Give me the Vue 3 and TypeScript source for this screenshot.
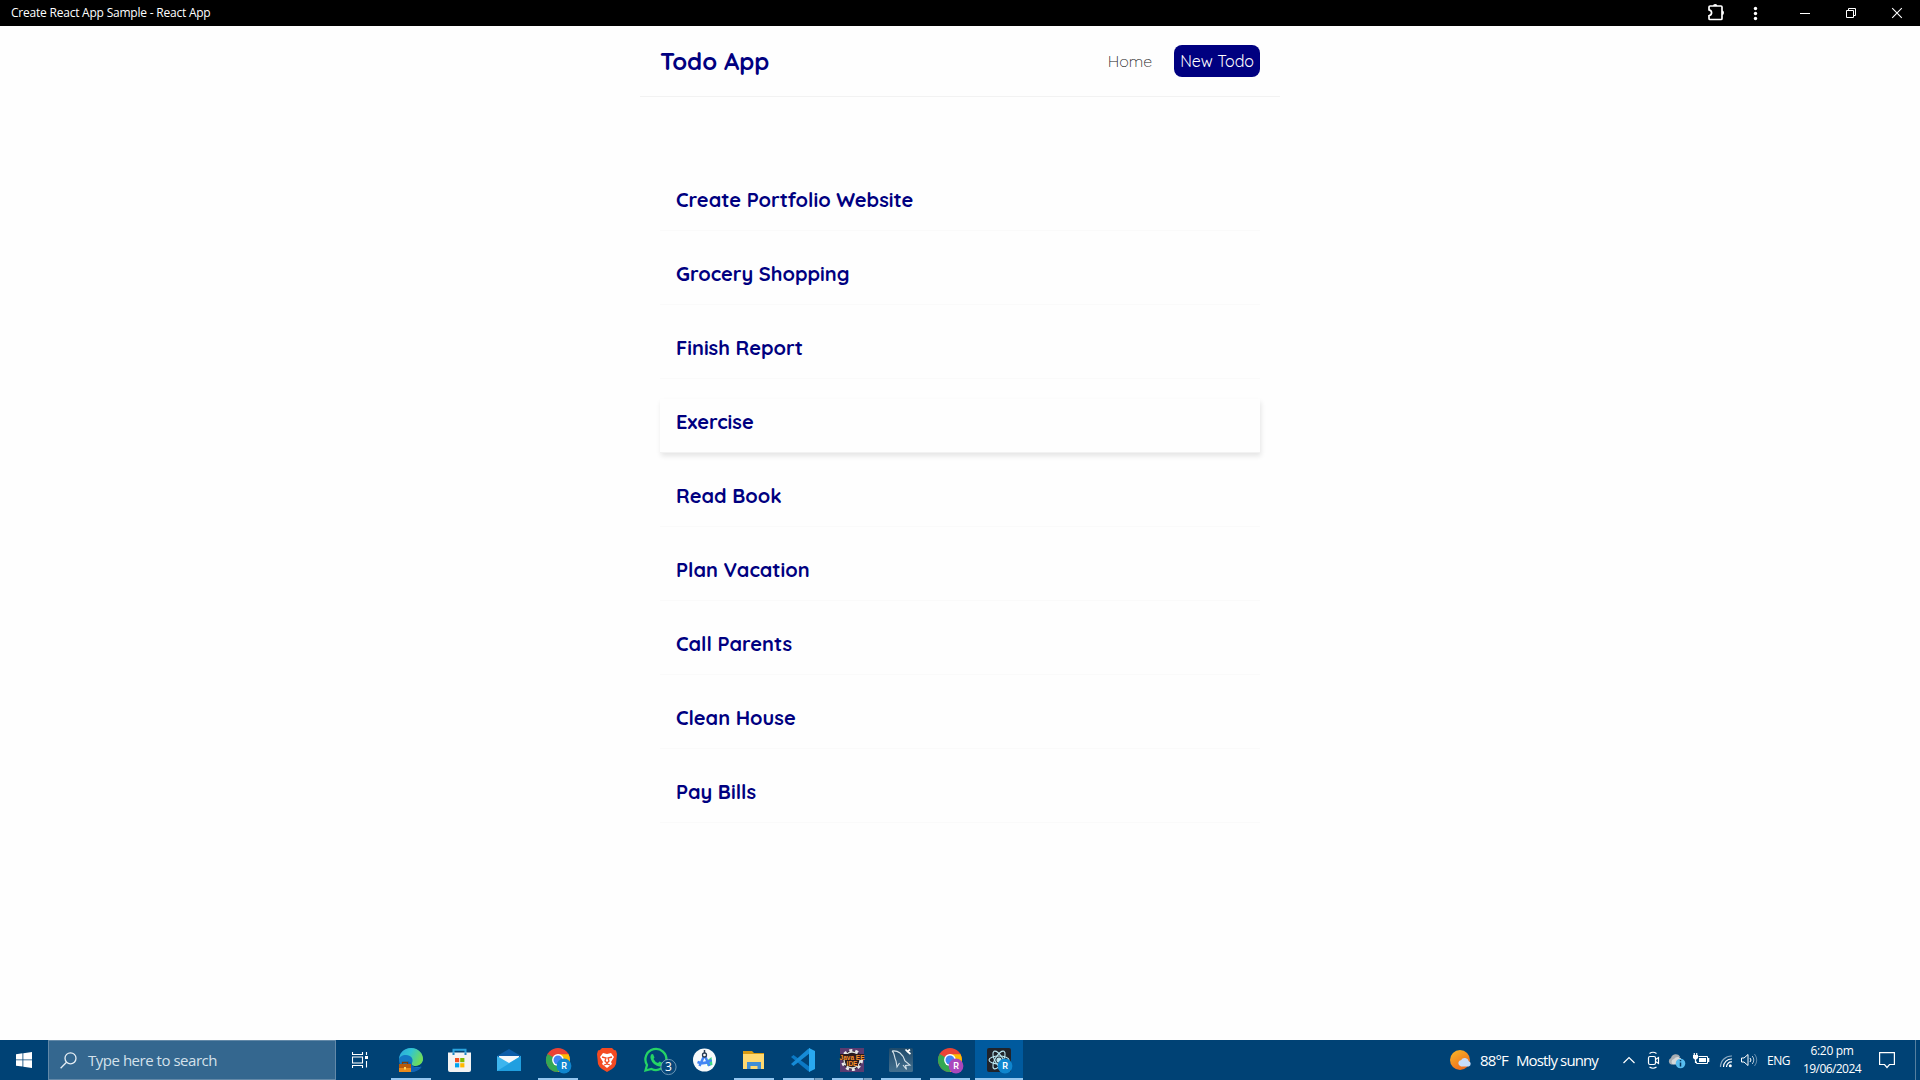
<script setup lang="ts">
import { ref } from 'vue'

const todos: string[] = [
  'Create Portfolio Website',
  'Grocery Shopping',
  'Finish Report',
  'Exercise',
  'Read Book',
  'Plan Vacation',
  'Call Parents',
  'Clean House',
  'Pay Bills',
]
const active = ref(3)

// Tracks a label out so that it fills the given width in pixels.
const vFit = {
  mounted(el: HTMLElement, binding: { value: number }) {
    const natural = el.getBoundingClientRect().width
    const count = (el.textContent ?? '').length
    el.style.letterSpacing = `${(binding.value - natural) / count}px`
  },
}

const apps = [
  { id: 'edge', open: true },
  { id: 'store' },
  { id: 'mail' },
  { id: 'chrome', open: true, badge: '#0f86cf' },
  { id: 'brave' },
  { id: 'whatsapp' },
  { id: 'studio' },
  { id: 'explorer', open: true },
  { id: 'code', open: true, stacked: true },
  { id: 'eclipse', open: true, stacked: true },
  { id: 'mysql', open: true },
  { id: 'chrome', open: true, badge: '#ab47bc' },
  { id: 'react', open: true, focused: true, badge: '#0f86cf' },
] as { id: string; open?: boolean; stacked?: boolean; focused?: boolean; badge?: string }[]
</script>

<template>
  <div class="screen">
    <div class="titlebar">
      <span v-fit="199.5" class="window-title">Create React App Sample - React App</span>
      <svg class="window-tools" width="220" height="26" viewBox="1700 0 220 26" fill="none">
        <path
          d="M1710.2 6H1721Q1722 6 1722 7V18.500Q1722 19.500 1721 19.500H1710Q1709 19.500 1709 18.500V15.700Q1711.600 15 1711.600 12.700T1709 9.800V7Q1709 6 1710.200 6Z"
          stroke="#fff" stroke-width="1.7"
        />
        <path d="M1713 6a2.200 2 0 0 1 4.400 0zM1722 10.600a2 2.200 0 0 1 0 4.400z" fill="#fff" />
        <circle cx="1755.500" cy="8.500" r="1.700" fill="#fff" />
        <circle cx="1755.500" cy="13.500" r="1.700" fill="#fff" />
        <circle cx="1755.500" cy="18.500" r="1.700" fill="#fff" />
        <path d="M1800 13.500h10M1846.500 10.500h7v7h-7zM1848.500 10v-1.500h7v7h-1.500" stroke="#fff" />
        <path d="M1892.200 8.200l9.600 9.600M1901.800 8.200l-9.600 9.600" stroke="#fff" stroke-width="1.100" />
      </svg>
    </div>

    <div class="page">
      <nav class="navbar">
        <h1>Todo App</h1>
        <div class="links">
          <a class="home">Home</a>
          <a class="new">New Todo</a>
        </div>
      </nav>
      <main class="todo-list">
        <article v-for="(todo, i) in todos" :key="todo" class="todo" :class="{ active: i === active }">
          <h2>{{ todo }}</h2>
        </article>
      </main>
    </div>

    <footer class="taskbar">
      <div class="start">
        <svg width="16" height="16" viewBox="0 0 16 16" fill="#fff">
          <path d="M0 2.200L6.500 1.300V7.500H0zM7.300 1.200L16 0V7.500H7.300zM0 8.300H6.500V14.600L0 13.700zM7.300 8.300H16V16L7.300 14.700z" />
        </svg>
      </div>
      <div class="search">
        <svg width="17" height="17" viewBox="0 0 17 17" fill="none" stroke="#e6eef4" stroke-width="1.300">
          <circle cx="10.500" cy="6.300" r="5.500" />
          <path d="M6.500 10.300L.6 16.200" />
        </svg>
        <span v-fit="129">Type here to search</span>
      </div>
      <div class="taskview">
        <svg width="17" height="16" viewBox="0 0 17 16" fill="none" stroke="#fff" stroke-width="1.100">
          <path d="M.5 0v2.500h10V0M.5 5h10v6h-10zM.5 16v-2.500h10V16M14.500 0v3M14.500 9v6.500" />
          <path d="M13 4h3v3h-3z" fill="#fff" stroke="none" />
        </svg>
      </div>

      <div class="apps">
        <div
          v-for="(app, i) in apps"
          :key="i"
          class="app"
          :class="{ open: app.open, stacked: app.stacked, focused: app.focused }"
        >
          <svg width="40" height="40" viewBox="-20 -20 40 40">
            <g v-if="app.id === 'edge'">
              <defs>
                <linearGradient id="edgeTop" x1="0" y1="0" x2="1" y2=".4">
                  <stop offset="0" stop-color="#2aa5dc" /><stop offset=".5" stop-color="#31c5d3" /><stop offset="1" stop-color="#6fdc5a" />
                </linearGradient>
              </defs>
              <circle r="12" fill="#1378c4" />
              <path d="M-12 0C-12-7-7-12 0-12C8-12 12-6 12-1C12 4 8 6 4.500 6C1 6-.5 4.500 1 3C3-1 0-5-5-5C-9-5-12-3-12 0Z" fill="url(#edgeTop)" />
              <path d="M1 3C-.5 4.500 1 6 4.500 6C7.500 6 10.500 4.500 12 1V5L9 7H3L0 5Z" fill="#004275" />
              <path d="M-3 1C-5 7-1 12 3 11.600C7 10.500 9.500 9 10.600 7C6 9 0 7 .5 3Z" fill="#1261b5" />
              <path d="M-8.500 4V2.500h5V4" fill="none" stroke="#7a3d08" stroke-width="1.300" />
              <path d="M-12 4H0v8h-12z" fill="#e98b1b" /><path d="M-12 4H0v4h-12z" fill="#b75b0c" /><path d="M-7 7h2v2.500h-2z" fill="#ffd35c" />
            </g>
            <g v-else-if="app.id === 'store'" transform="translate(-1 0)">
              <path d="M-5.500-6v-4.200h12V-6" fill="none" stroke="#2ba5df" stroke-width="2" />
              <path d="M-11-7.500H12V10Q12 12 10 12H-9Q-11 12-11 10Z" fill="#f3f3f3" />
              <path d="M-5.500-7.500v2.500M6.500-7.500v2.500" stroke="#1b83c4" stroke-width="2" />
              <path d="M-4-2h4.200v4.200H-4z" fill="#f25022" /><path d="M1.200-2h4.200v4.200H1.200z" fill="#7fba00" />
              <path d="M-4 3.200h4.200v4.200H-4z" fill="#00a4ef" /><path d="M1.200 3.200h4.200v4.200H1.200z" fill="#ffb900" />
            </g>
            <g v-else-if="app.id === 'mail'">
              <path d="M-12-4L0-11L12-4V3H-12z" fill="#0b5ca8" />
              <path d="M-10-4H10V5H-10z" fill="#f4f8fb" />
              <path d="M-12-4L0 3L12-4V11H-12z" fill="#3db5ee" /><path d="M-12 11L12-4V11z" fill="#209fe0" />
            </g>
            <g v-else-if="app.id === 'chrome'">
              <circle r="12" fill="#ea4335" />
              <path d="M0 0L-10.400-6A12 12 0 0 0 0 12L5 3z" fill="#34a853" />
              <path d="M0 0V-5.700H10.500A12 12 0 0 1 0 12L5 3z" fill="#fbbc04" />
              <circle r="5.900" fill="#fff" /><circle r="4.500" fill="#4285f4" />
            </g>
            <g v-else-if="app.id === 'brave'">
              <path d="M-5-12H5L7-10L9-9.500L10-6L9 4Q8 7 5 9L0 12L-5 9Q-8 7-9 4L-10-6L-9-9.500L-7-10Z" fill="#f44a22" />
              <path d="M-4-7L0-6L4-7L7-3L4 2L5 4L0 8L-5 4L-4 2L-7-3Z" fill="#fff" />
              <path d="M-5-3L-1-2L-2 1L0 3L2 1L1-2L5-3M-3 5L0 4L3 5" fill="none" stroke="#f44a22" stroke-width="1.300" />
            </g>
            <g v-else-if="app.id === 'whatsapp'">
              <path d="M-10.500 10.500L-9 5A10.500 10.500 0 1 1-4.500 9Z" fill="none" stroke="#25d366" stroke-width="2.300" />
              <path d="M-5-5.500L-3-6L-1.500-2.500L-2.500-1Q-1 2 2 3L3.500 1.500L7 3L6 5.500Q3 8-2 4Q-7-1-5-5.500Z" fill="#25d366" />
              <circle cx="12.500" cy="7" r="7.600" fill="#08477a" stroke="#87a9c3" stroke-width=".8" />
              <text x="12.500" y="11.300" class="count">3</text>
            </g>
            <g v-else-if="app.id === 'studio'" transform="translate(-.5 0)">
              <circle r="11.500" fill="#f7fafb" /><path d="M2 1L7-3L8 5L3 6z" fill="#3ddc84" />
              <path d="M0-5L-5 6M0-5L5 6M-7 2Q0 5 7 0" fill="none" stroke="#4285f4" stroke-width="2.500" />
              <circle cy="-5" r="2" fill="#f7fafb" stroke="#263b52" stroke-width="1.300" /><path d="M0-10v3" stroke="#263b52" stroke-width="1.500" />
            </g>
            <g v-else-if="app.id === 'explorer'">
              <path d="M-11-9H-2L0-7H10V-2H-11z" fill="#d89b13" /><path d="M-11-6H10V9H-11z" fill="#ffd970" />
              <path d="M-7 9V2H7V9H3.500V6H-3.500V9z" fill="#3f8ed6" />
            </g>
            <g v-else-if="app.id === 'code'">
              <path d="M-12-3L-9.500-5L7 7V12L5 11z" fill="#0b79c5" /><path d="M-12 4L-9.500 6L7-7V-12L5-11z" fill="#168bd6" />
              <path d="M6-12L12-9V9L6 12z" fill="#29a9f1" />
            </g>
            <g v-else-if="app.id === 'eclipse'">
              <path d="M-12-12H12V12H-12z" fill="#5a3b70" /><circle r="9.500" fill="#2c2226" stroke="#e8e8e8" stroke-width="3" stroke-dasharray="3 2.970" />
              <circle r="8" fill="#241b1d" stroke="#dcdcdc" stroke-width="1.300" />
              <path d="M-12-6H12V0H-12zM-6 0H6V6H-6z" fill="#2c1a1c" />
              <text x="0" y="-.5" class="java">Java EE</text><text x="0" y="5.500" class="java">IDE</text>
            </g>
            <g v-else-if="app.id === 'mysql'">
              <defs>
                <linearGradient id="dolphin" x1="0" y1="0" x2="0" y2="1"><stop stop-color="#1f4a6a" /><stop offset="1" stop-color="#44708f" /></linearGradient>
              </defs>
              <rect x="-12" y="-12" width="24" height="24" rx="1.500" fill="url(#dolphin)" />
              <path d="M-9-9C-3-10 2-6 4 1L9 5L4.500 5.500L5.500 9.500L2 5M-9-9C-6-7-7-2-5 1L-4 7L-1.500 3" fill="none" stroke="#d5e2e9" stroke-width="1.100" />
              <path d="M4.500-10.500L6.500-8.500L9-10.500M6.500-8.500L9.500-6" fill="none" stroke="#fff" stroke-width="1.700" />
            </g>
            <g v-else fill="none" stroke="#bceaf5" stroke-width="1.100">
              <rect x="-12" y="-12" width="24" height="24" rx="2" fill="#20232a" stroke="none" />
              <ellipse rx="10" ry="4" /><ellipse rx="10" ry="4" transform="rotate(60)" /><ellipse rx="10" ry="4" transform="rotate(120)" />
              <circle r="2" fill="#bceaf5" />
            </g>
            <g v-if="app.badge">
              <circle cx="6" cy="6" r="7.400" :fill="app.badge" /><text x="6" y="9.200" class="profile">R</text>
            </g>
          </svg>
        </div>
      </div>

      <div class="tray">
        <svg class="weather" width="24" height="24" viewBox="0 0 24 24">
          <defs>
            <linearGradient id="sun" x1="0" y1="0" x2=".6" y2="1"><stop stop-color="#f8ba28" /><stop offset="1" stop-color="#ee6b1c" /></linearGradient>
          </defs>
          <circle cx="10" cy="12" r="10" fill="url(#sun)" />
          <path d="M11 18.500a3.200 3.200 0 0 1 0-6.300a4.200 4.200 0 0 1 7.800 1a2.800 2.800 0 0 1 0 5.300z" fill="#c7dcfa" />
        </svg>
        <span class="temperature"><span v-fit="28">88°F</span></span>
        <span class="condition"><span v-fit="82">Mostly sunny</span></span>
        <svg width="145" height="40" viewBox="1620 1040 145 40" fill="none" stroke="#fff" stroke-width="1.200">
          <path d="M1623.500 1063l5.500-5.500l5.500 5.500" />
          <rect x="1648.500" y="1056.500" width="7" height="8" rx="1.500" /><path d="M1655.500 1059.500l3-2v6l-3-2M1649.500 1053.500q3.500-2.500 7 0M1649.500 1067q3.500 2.500 7 0" />
          <path d="M1671 1064.500a3.500 3.500 0 0 1 0-6.500a5 5 0 0 1 9-1.500l-7 8z" fill="#a6adb3" stroke="none" />
          <path d="M1673 1064.500a3 3 0 0 1 1-5.500a4.500 4.500 0 0 1 8 1v4.500z" fill="#d5d8da" stroke="none" />
          <circle cx="1680.500" cy="1063.500" r="4.800" fill="#57bdf0" stroke="none" /><path d="M1680.500 1062.500v4M1680.500 1060v1.300" stroke="#06365e" stroke-width="1.500" />
          <path d="M1698.500 1056.500h9v7h-11v-2" stroke-width="1" /><path d="M1699 1058h7v4h-7zM1693 1055h5v3q-2.500 3-5 0zM1708 1058h1.300v4H1708z" fill="#fff" stroke="none" /><path d="M1694.300 1053v2M1696.700 1053v2M1695.500 1059v4" />
          <path d="M1720.500 1067a11 11 0 0 1 11.500-11" stroke="#8baac2" /><path d="M1723.500 1067a8 8 0 0 1 8.500-8M1726.500 1067a5 5 0 0 1 5.500-5" /><circle cx="1730.300" cy="1065.800" r="1.500" fill="#fff" stroke="none" />
          <path d="M1741.500 1058h2.500l4-3.500v11l-4-3.500h-2.500zM1750 1058q2 2 0 4" stroke-width="1" /><path d="M1752.200 1056q3.200 4 0 8" stroke="#b0c5d5" stroke-width="1" /><path d="M1754.500 1054q4.500 6 0 12" stroke="#648cac" stroke-width="1" />
        </svg>
        <span class="language"><span v-fit="23">ENG</span></span>
        <div class="clock">
          <span v-fit="43">6:20 pm</span>
          <span v-fit="58">19/06/2024</span>
        </div>
        <svg class="notice" width="16" height="17" viewBox="0 0 16 17" fill="none" stroke="#fff" stroke-width="1.200"><path d="M.6.600H15.400V12.500H10.500L8 15.500L5.500 12.500H.6Z" /></svg>
        <div class="show-desktop"></div>
      </div>
    </footer>
  </div>
</template>

<style>
body {
  margin: 0;
  overflow: hidden;
}
</style>

<style scoped>
.screen {
  width: 1920px;
  height: 1080px;
  display: flex;
  flex-direction: column;
  background: #fefefe;
  font-family: "Segoe UI", "Open Sans", "Noto Sans", sans-serif;
}
span {
  white-space: nowrap;
}
svg {
  flex: none;
  display: block;
}
.titlebar {
  flex: none;
  height: 26px;
  display: flex;
  justify-content: space-between;
  padding-left: 11px;
  background: #000;
  color: #fff;
  font-size: 12px;
  line-height: 25px;
}
.page {
  flex: 1;
  width: 640px;
  margin: 0 auto;
  font-family: Quicksand, Lato, sans-serif;
}
.navbar {
  height: 71px;
  box-sizing: border-box;
  padding: 0 20px;
  display: flex;
  align-items: center;
  justify-content: space-between;
  border-bottom: 1px solid #f2f2f2;
}
h1,
h2 {
  margin: 0;
  color: #000080;
  font-weight: 700;
}
h1 {
  font-size: 24px;
  line-height: 30px;
}
.links {
  display: flex;
  align-items: center;
  gap: 22px;
  font-size: 16px;
  line-height: 20px;
}
.home {
  color: #222;
  font-weight: 300;
}
.new {
  height: 32px;
  box-sizing: border-box;
  padding: 6px;
  border-radius: 8px;
  background: #000080;
  color: #fff;
  white-space: nowrap;
}
.todo-list {
  margin: 80px 20px 0;
  display: flex;
  flex-direction: column;
  gap: 20px;
}
.todo {
  height: 54px;
  box-sizing: border-box;
  padding: 10px 16px;
  border-bottom: 1px solid #fafafa;
}
.todo.active {
  box-shadow: 1px 3px 5px rgba(0, 0, 0, 0.1);
  border-bottom-color: #f2f2f2;
}
h2 {
  font-size: 20px;
  line-height: 25px;
}
.taskbar {
  flex: none;
  height: 40px;
  display: flex;
  background: #004275;
  color: #fff;
}
.start {
  width: 48px;
  display: flex;
  align-items: center;
  justify-content: center;
}
.search {
  width: 288px;
  box-sizing: border-box;
  border: 1px solid #6389a8;
  background: #34678f;
  display: flex;
  align-items: center;
  padding-left: 11px;
  gap: 11px;
  color: #d4e1eb;
  font-size: 15px;
}
.taskview {
  width: 51px;
  box-sizing: border-box;
  padding-left: 16px;
  display: flex;
  align-items: center;
}
.apps {
  display: flex;
  gap: 1px;
}
.app {
  width: 48px;
  height: 40px;
  display: flex;
  justify-content: center;
  background-repeat: no-repeat;
  background-position: 4px 38px;
  background-size: 40px 2px;
}
.app svg {
  overflow: visible;
}
.app.open {
  background-image: linear-gradient(#94c6ef, #94c6ef);
}
.app.stacked {
  background-image: linear-gradient(90deg, #94c6ef 31px, #44729a 31px, #44729a 32px, #779fc0 32px);
}
.app.focused {
  background-color: #005a9e;
  background-size: 48px 2px;
  background-position: 0 38px;
}
.count,
.profile,
.java {
  text-anchor: middle;
  fill: #fff;
}
.count {
  font-size: 12px;
}
.profile {
  font: 600 9px Roboto, sans-serif;
}
.java {
  font: 700 6.5px "Liberation Sans", sans-serif;
  fill: #f6922d;
}
.tray {
  margin-left: auto;
  display: flex;
  align-items: center;
  font-size: 15px;
}
.temperature {
  width: 36px;
  padding-left: 6px;
}
.condition {
  width: 104px;
}
.language {
  width: 36px;
  padding-left: 2px;
  font-size: 12px;
}
.clock {
  width: 58px;
  display: flex;
  flex-direction: column;
  align-items: center;
  font-size: 12px;
  line-height: 18px;
}
.notice {
  margin: 0 20px 0 18px;
}
.show-desktop {
  width: 4px;
  height: 40px;
  border-left: 1px solid #557f9f;
}
</style>
